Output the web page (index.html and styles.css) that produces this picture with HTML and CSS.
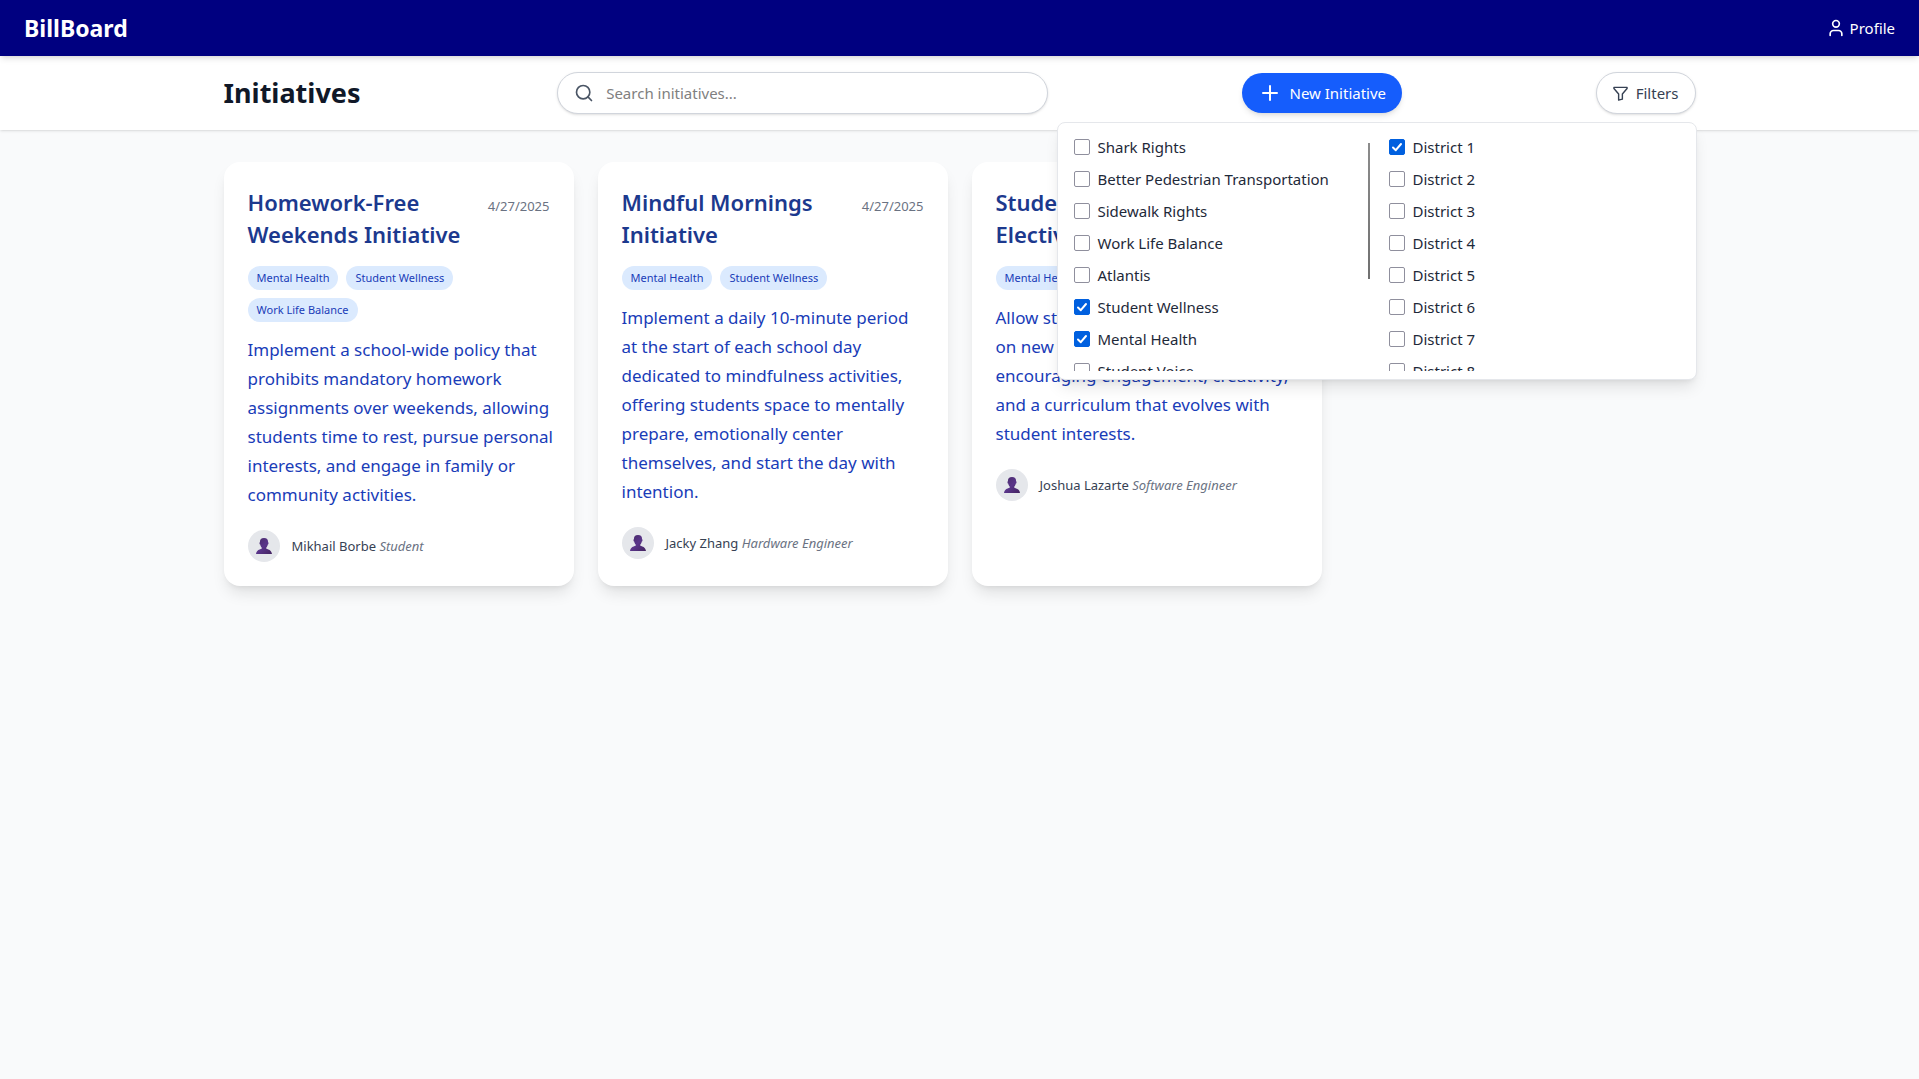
FILE: index.html
```html
<!DOCTYPE html>
<html lang="en">
<head>
<meta charset="utf-8">
<meta name="viewport" content="width=device-width, initial-scale=1">
<title>BillBoard</title>
<link rel="stylesheet" href="styles.css">
</head>
<body>
<svg class="sprite" aria-hidden="true">
  <defs>
    <linearGradient id="bust-fill" x1="0" y1="0" x2="1" y2="1">
      <stop offset="0" stop-color="#472a66"/>
      <stop offset="0.5" stop-color="#5a358a"/>
      <stop offset="1" stop-color="#43235f"/>
    </linearGradient>
    <symbol id="bust" viewBox="0 0 16 16">
      <path fill="url(#bust-fill)" d="M8 0C5.2 0 3.8 1.5 3.9 4.2C3.3 4.3 3.3 6.300 4.200 6.600C4.500 8 5 8.900 5.700 9.500V10.800C3 11.600.600 12.500 0 16H16C15.400 12.500 13 11.600 10.300 10.800V9.500C11 8.900 11.500 8 11.800 6.600C12.700 6.300 12.700 4.300 12.100 4.200C12.200 1.500 10.800 0 8 0Z"/>
    </symbol>
  </defs>
</svg>

<nav class="navbar">
  <a class="brand" href="#">BillBoard</a>
  <a class="profile" href="#">
    <svg width="20" height="20" viewBox="0 0 24 24" fill="none" stroke="currentColor" stroke-width="2" stroke-linecap="round" aria-hidden="true"><circle cx="12" cy="7" r="4"/><path d="M19 21v-2a4 4 0 0 0-4-4H9a4 4 0 0 0-4 4v2"/></svg>
    Profile
  </a>
</nav>

<header class="toolbar">
  <div class="container toolbar-row">
    <h1 class="page-title">Initiatives</h1>
    <label class="search">
      <svg width="20" height="20" viewBox="0 0 24 24" fill="none" stroke="currentColor" stroke-width="2" stroke-linecap="round" aria-hidden="true"><circle cx="11" cy="11" r="8"/><path d="m21 21-4.300-4.300"/></svg>
      <input class="search-input" type="text" placeholder="Search initiatives..." aria-label="Search initiatives">
    </label>
    <button class="btn btn-primary" type="button">
      <svg width="24" height="24" viewBox="0 0 24 24" fill="none" stroke="currentColor" stroke-width="2" stroke-linecap="round" aria-hidden="true"><path d="M5 12h14M12 5v14"/></svg>
      New Initiative
    </button>
    <div class="filter">
      <button class="btn btn-outline" type="button">
        <svg width="15" height="15" viewBox="0 0 16 16" fill="none" stroke="currentColor" stroke-width="1.500" stroke-linejoin="round" aria-hidden="true"><path d="M1 1.500h14v1.200L10 8.500V14l-4 1V8.500L1 2.700z"/></svg>
        Filters
      </button>
      <div class="filter-panel">
        <div class="filter-clip">
          <div class="options">
            <label class="option"><input type="checkbox"> Shark Rights</label>
            <label class="option"><input type="checkbox"> Better Pedestrian Transportation</label>
            <label class="option"><input type="checkbox"> Sidewalk Rights</label>
            <label class="option"><input type="checkbox"> Work Life Balance</label>
            <label class="option"><input type="checkbox"> Atlantis</label>
            <label class="option"><input type="checkbox" checked> Student Wellness</label>
            <label class="option"><input type="checkbox" checked> Mental Health</label>
            <label class="option"><input type="checkbox"> Student Voice</label>
          </div>
          <div class="divider"></div>
          <div class="options">
            <label class="option"><input type="checkbox" checked> District 1</label>
            <label class="option"><input type="checkbox"> District 2</label>
            <label class="option"><input type="checkbox"> District 3</label>
            <label class="option"><input type="checkbox"> District 4</label>
            <label class="option"><input type="checkbox"> District 5</label>
            <label class="option"><input type="checkbox"> District 6</label>
            <label class="option"><input type="checkbox"> District 7</label>
            <label class="option"><input type="checkbox"> District 8</label>
          </div>
        </div>
      </div>
    </div>
  </div>
</header>

<main class="container cards">
  <article class="card">
    <div class="card-head">
      <h2 class="card-title">Homework-Free Weekends Initiative</h2>
      <time class="date" datetime="2025-04-27">4/27/2025</time>
    </div>
    <div class="tags">
      <span class="tag">Mental Health</span>
      <span class="tag">Student Wellness</span>
      <span class="tag">Work Life Balance</span>
    </div>
    <p class="summary">Implement a school-wide policy that prohibits mandatory homework assignments over weekends, allowing students time to rest, pursue personal interests, and engage in family or community activities.</p>
    <div class="author">
      <span class="avatar"><svg width="16" height="16" aria-hidden="true"><use href="#bust"/></svg></span>
      <p class="byline">Mikhail Borbe <em class="role">Student</em></p>
    </div>
  </article>
  <article class="card">
    <div class="card-head">
      <h2 class="card-title">Mindful Mornings Initiative</h2>
      <time class="date" datetime="2025-04-27">4/27/2025</time>
    </div>
    <div class="tags">
      <span class="tag">Mental Health</span>
      <span class="tag">Student Wellness</span>
    </div>
    <p class="summary">Implement a daily 10-minute period at&nbsp;the start of each school day dedicated to mindfulness activities, offering students space to mentally prepare, emotionally center themselves, and start the day with intention.</p>
    <div class="author">
      <span class="avatar"><svg width="16" height="16" aria-hidden="true"><use href="#bust"/></svg></span>
      <p class="byline">Jacky Zhang <em class="role">Hardware Engineer</em></p>
    </div>
  </article>
  <article class="card">
    <div class="card-head">
      <h2 class="card-title">Student-Proposed Electives</h2>
      <time class="date" datetime="2025-04-27">4/27/2025</time>
    </div>
    <div class="tags">
      <span class="tag">Mental Health</span>
      <span class="tag">Student Voice</span>
    </div>
    <p class="summary">Allow students to propose and vote on&nbsp;new elective course offerings, encouraging engagement, creativity, and a curriculum that evolves with student interests.</p>
    <div class="author">
      <span class="avatar"><svg width="16" height="16" aria-hidden="true"><use href="#bust"/></svg></span>
      <p class="byline">Joshua Lazarte <em class="role">Software Engineer</em></p>
    </div>
  </article>
</main>
</body>
</html>
```
FILE: styles.css
```css
*,
*::before,
*::after {
  box-sizing: border-box;
}

body {
  margin: 0;
  min-height: 100vh;
  background: #f9fafb;
  color: #1e2939;
  font-family: "Segoe UI", "Noto Sans", sans-serif;
  font-size: 15px;
  line-height: 24px;
}

h1,
h2,
p {
  margin: 0;
}

svg {
  display: block;
  flex-shrink: 0;
}

button,
input {
  font: inherit;
}

.sprite {
  position: absolute;
  width: 0;
  height: 0;
}

.container {
  width: 100%;
  max-width: 1536px;
  margin: 0 auto;
  padding: 0 32px;
}

/* Top bar */
.navbar {
  position: relative;
  z-index: 2;
  display: flex;
  align-items: center;
  justify-content: space-between;
  padding: 12px 24px;
  background: #000080;
  color: #fff;
  box-shadow: 0 4px 6px -1px rgb(0 0 0 / 0.1), 0 2px 4px -2px rgb(0 0 0 / 0.1);
}

.brand {
  color: inherit;
  font-size: 23px;
  font-weight: 700;
  line-height: 32px;
  text-decoration: none;
}

.profile {
  display: flex;
  align-items: center;
  gap: 4px;
  color: inherit;
  text-decoration: none;
}

/* Title, search and actions */
.toolbar {
  position: relative;
  z-index: 1;
  padding: 16px 0;
  background: #fff;
  box-shadow: 0 1px 3px rgb(0 0 0 / 0.1), 0 1px 2px -1px rgb(0 0 0 / 0.1);
}

.toolbar-row {
  display: flex;
  align-items: center;
  justify-content: space-between;
}

.page-title {
  min-width: 140px;
  color: #101828;
  font-size: 27px;
  font-weight: 700;
  line-height: 36px;
}

.search {
  display: flex;
  align-items: center;
  gap: 12px;
  width: calc(100% / 3);
  padding: 8px 16px;
  border: 1px solid #d1d5dc;
  border-radius: 24px;
  background: #fff;
  color: #4a5565;
  box-shadow: 0 1px 3px rgb(0 0 0 / 0.1), 0 1px 2px -1px rgb(0 0 0 / 0.1);
}

.search-input {
  flex: 1;
  min-width: 0;
  height: 24px;
  padding: 0;
  border: 0;
  outline: 0;
  background: transparent;
  color: #1e2939;
}

.search-input::placeholder {
  color: #808080;
}

.btn {
  display: flex;
  align-items: center;
  gap: 8px;
  padding: 8px 16px;
  border-radius: 24px;
  cursor: pointer;
}

.btn-primary {
  border: 0;
  background: #155dfc;
  color: #fff;
  box-shadow: 0 4px 6px -1px rgb(0 0 0 / 0.1), 0 2px 4px -2px rgb(0 0 0 / 0.1);
}

.btn-outline {
  border: 1px solid #d1d5dc;
  background: #fff;
  color: #364153;
  box-shadow: 0 1px 3px rgb(0 0 0 / 0.1), 0 1px 2px -1px rgb(0 0 0 / 0.1);
}

/* Filter menu */
.filter {
  position: relative;
}

.filter-panel {
  position: absolute;
  top: calc(100% + 8px);
  right: -1px;
  width: 640px;
  padding: 8px 16px;
  border: 1px solid #e5e7eb;
  border-radius: 8px;
  background: #fff;
  box-shadow: 0 10px 15px -3px rgb(0 0 0 / 0.1), 0 4px 6px -4px rgb(0 0 0 / 0.1);
}

.filter-clip {
  display: grid;
  grid-template-columns: 294px 2px 1fr;
  max-height: 240px;
  overflow: hidden;
}

.divider {
  height: 136px;
  margin-top: 12px;
  background: linear-gradient(#8c8c8c, #707070);
}

.divider + .options {
  padding-left: 19px;
}

.option {
  display: flex;
  align-items: center;
  gap: 8px;
  padding: 4px 0;
}

.option input {
  appearance: none;
  width: 16px;
  height: 16px;
  margin: 0;
  border: 1px solid #8f8f9d;
  border-radius: 2px;
  background: #fff;
}

.option input:checked {
  border-color: #0060df;
  background: #0060df url("data:image/svg+xml,%3Csvg xmlns='http://www.w3.org/2000/svg' viewBox='0 0 14 14'%3E%3Cpath d='M3 7.500 5.800 10.200 11 4' fill='none' stroke='white' stroke-width='2' stroke-linecap='round' stroke-linejoin='round'/%3E%3C/svg%3E") center / 14px 14px no-repeat;
}

/* Initiative cards */
.cards {
  display: grid;
  grid-template-columns: repeat(4, 1fr);
  gap: 24px;
  padding-top: 32px;
  padding-bottom: 32px;
}

.card {
  padding: 24px;
  border-radius: 16px;
  background: #fff;
  box-shadow: 0 10px 15px -3px rgb(0 0 0 / 0.1), 0 4px 6px -4px rgb(0 0 0 / 0.1);
}

.card-head {
  display: flex;
  align-items: flex-start;
  justify-content: space-between;
  gap: 16px;
}

.card-title {
  color: #1c398e;
  font-size: 22px;
  font-weight: 600;
  line-height: 32px;
}

.date {
  padding-top: 10px;
  color: #6a7282;
  font-size: 13px;
  line-height: 20px;
}

.tags {
  display: flex;
  flex-wrap: wrap;
  gap: 8px;
  margin-top: 16px;
}

.tag {
  padding: 4px 9px;
  border-radius: 12px;
  background: #dbeafe;
  color: #193cb8;
  font-size: 11px;
  line-height: 16px;
}

.summary {
  margin-top: 13px;
  margin-right: -4px;
  color: #193cb8;
  font-size: 17px;
  line-height: 29px;
}

.author {
  display: flex;
  align-items: center;
  gap: 12px;
  margin-top: 21px;
}

.avatar {
  display: grid;
  place-items: center;
  width: 32px;
  height: 32px;
  border-radius: 50%;
  background: #e5e7eb;
}

.byline {
  color: #364153;
  font-size: 13px;
  line-height: 20px;
}

.role {
  color: #6a7282;
}
```
